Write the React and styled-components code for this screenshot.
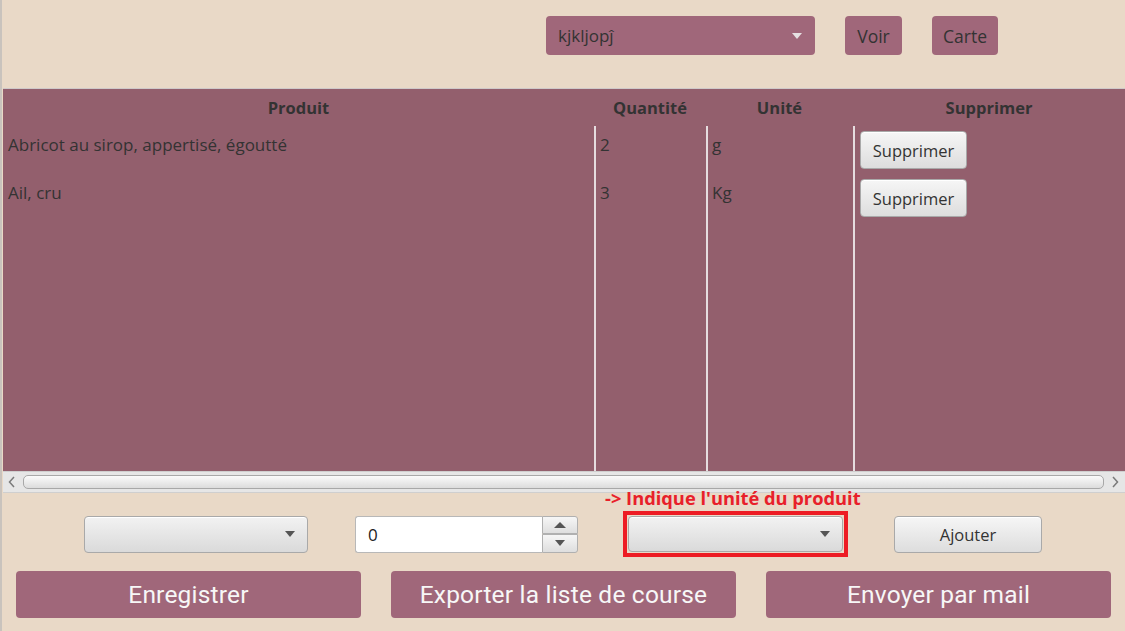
import React from 'react';
import styled, { createGlobalStyle } from 'styled-components';

const GlobalStyle = createGlobalStyle`
  html, body {
    margin: 0;
    padding: 0;
    background: #e9d9c7;
  }
  * {
    box-sizing: border-box;
  }
`;

const Page = styled.div`
  width: 1125px;
  height: 631px;
  background: #e9d9c7;
  border-left: 2px solid #c9c3bd;
  display: flex;
  flex-direction: column;
  font-family: 'Open Sans', 'Noto Sans', sans-serif;
  color: #333333;
  overflow: hidden;
`;

const TopBar = styled.div`
  height: 88px;
  display: flex;
  align-items: flex-start;
  padding: 16px 0 0 544px;
  gap: 30px;
`;

const PinkSelect = styled.div`
  width: 269px;
  height: 39px;
  border-radius: 4px;
  background: #a0677a;
  display: flex;
  align-items: center;
  justify-content: space-between;
  padding: 0 13px 0 12px;
  font-size: 17px;
`;

const PinkButton = styled.div`
  height: 39px;
  width: ${p => p.w}px;
  border-radius: 4px;
  background: #a0677a;
  display: flex;
  align-items: center;
  justify-content: center;
  font-size: 17.5px;
`;

const Caret = styled.span`
  width: 0;
  height: 0;
  border-left: 5px solid transparent;
  border-right: 5px solid transparent;
  border-top: 6px solid ${p => p.color || '#555'};
`;

const TablePanel = styled.div`
  margin-left: 1px;
  border-top: 1px solid #cfc9c9;
  height: 405px;
  display: flex;
  flex-direction: column;
  background: #935f6d;
`;

const Grid = styled.div`
  display: grid;
  grid-template-columns: 591px 112px 147px 272px;
`;

const HeaderCell = styled.div`
  height: 37px;
  display: flex;
  align-items: center;
  justify-content: center;
  font-weight: 700;
  font-size: 16.5px;
  color: #333;
`;

const Body = styled(Grid)`
  flex: 1;
`;

const Column = styled.div`
  display: flex;
  flex-direction: column;
  border-left: ${p => (p.first ? 'none' : '2px solid #e6dcdf')};
`;

const Cell = styled.div`
  height: 48px;
  padding: 7px ${p => (p.first ? '5px' : '4px')} 5px;
  font-size: 17px;
  line-height: 24px;
  color: #333;
`;

const ButtonCell = styled.div`
  height: 48px;
  padding: 5px 0 0 5px;
`;

const GreyButton = styled.div`
  width: ${p => p.w}px;
  height: ${p => p.h || 38}px;
  margin-left: ${p => p.ml || 0}px;
  border: 1px solid #a9a9a9;
  border-radius: 4px;
  background: linear-gradient(#f6f6f6, #dddddd);
  box-shadow: inset 0 1px 0 #ffffff;
  display: flex;
  align-items: center;
  justify-content: center;
  font-size: 16.5px;
  color: #333;
`;

const ScrollBar = styled.div`
  height: 22px;
  background: #e6e6e6;
  border-top: 1px solid #cfcfcf;
  border-bottom: 1px solid #cfcfcf;
  display: flex;
  align-items: center;
  padding: 0 6px 0 5px;
  gap: 7px;
`;

const Thumb = styled.div`
  flex: 1;
  height: 14px;
  border: 1px solid #a8a8a8;
  border-radius: 5px;
  background: linear-gradient(#fbfbfb, #dcdcdc);
`;

const Chevron = ({ dir }) => (
  <svg width="8" height="12" viewBox="0 0 8 12">
    <path
      d={dir === 'left' ? 'M6 1 L1.5 6 L6 11' : 'M2 1 L6.5 6 L2 11'}
      fill="none"
      stroke="#7a7a7a"
      strokeWidth="1.5"
    />
  </svg>
);

const Footer = styled.div`
  display: flex;
  flex-direction: column;
`;

const Hint = styled.div`
  height: 18px;
  padding-left: 603px;
  color: #e8202a;
  font-weight: 700;
  font-size: 18.3px;
  line-height: 10px;
`;

const Controls = styled.div`
  height: 46px;
  display: flex;
  align-items: center;
  padding-left: 82px;
`;

const Combo = styled.div`
  width: ${p => p.w}px;
  height: ${p => p.h || 37}px;
  border: 1px solid #a9a9a9;
  border-radius: 4px;
  background: linear-gradient(#f2f2f2, #dadada);
  box-shadow: inset 0 1px 0 #ffffff;
  display: flex;
  align-items: center;
  justify-content: flex-end;
  padding-right: 12px;
`;

const Marker = styled.div`
  margin-left: 45px;
  border: 4px solid #ed1c24;
  padding: 1px;
`;

const Spinner = styled.div`
  display: flex;
  margin-left: 47px;
  height: 37px;
`;

const SpinField = styled.div`
  width: 187px;
  height: 37px;
  background: #ffffff;
  border: 1px solid #b8b8b8;
  border-right: none;
  border-radius: 3px 0 0 3px;
  display: flex;
  align-items: center;
  padding-left: 12px;
  font-size: 17px;
  color: #222;
`;

const SpinButtons = styled.div`
  display: flex;
  flex-direction: column;
  width: 36px;
`;

const SpinButton = styled.div`
  height: 18.5px;
  border: 1px solid #b0b0b0;
  border-radius: ${p => (p.up ? '0 3px 0 0' : '0 0 3px 0')};
  background: linear-gradient(#f6f6f6, #dedede);
  display: flex;
  align-items: center;
  justify-content: center;
`;

const UpCaret = styled.span`
  width: 0;
  height: 0;
  border-left: 6px solid transparent;
  border-right: 6px solid transparent;
  border-bottom: 6px solid #555;
`;

const Actions = styled.div`
  display: flex;
  gap: 30px;
  padding: 14px 0 0 14px;
`;

const BigButton = styled.div`
  width: 345px;
  height: 47px;
  border-radius: 4px;
  background: #a0677a;
  display: flex;
  align-items: center;
  justify-content: center;
  color: #f7f7f7;
  font-family: 'Roboto', 'Liberation Sans', sans-serif;
  font-size: 24.5px;
  letter-spacing: 0.2px;
`;

const rows = [
  { produit: 'Abricot au sirop, appertisé, égoutté', quantite: '2', unite: 'g' },
  { produit: 'Ail, cru', quantite: '3', unite: 'Kg' },
];

export default function App() {
  return (
    <Page>
      <GlobalStyle />
      <TopBar>
        <PinkSelect>
          <span>kjkljopĵ</span>
          <Caret color="#e6e0e2" />
        </PinkSelect>
        <PinkButton w={57}>Voir</PinkButton>
        <PinkButton w={66}>Carte</PinkButton>
      </TopBar>

      <TablePanel>
        <Grid>
          <HeaderCell>Produit</HeaderCell>
          <HeaderCell>Quantité</HeaderCell>
          <HeaderCell>Unité</HeaderCell>
          <HeaderCell>Supprimer</HeaderCell>
        </Grid>
        <Body>
          <Column first>
            {rows.map(r => (
              <Cell first key={r.produit}>{r.produit}</Cell>
            ))}
          </Column>
          <Column>
            {rows.map(r => (
              <Cell key={r.produit}>{r.quantite}</Cell>
            ))}
          </Column>
          <Column>
            {rows.map(r => (
              <Cell key={r.produit}>{r.unite}</Cell>
            ))}
          </Column>
          <Column>
            {rows.map(r => (
              <ButtonCell key={r.produit}>
                <GreyButton w={107}>Supprimer</GreyButton>
              </ButtonCell>
            ))}
          </Column>
        </Body>
        <ScrollBar>
          <Chevron dir="left" />
          <Thumb />
          <Chevron dir="right" />
        </ScrollBar>
      </TablePanel>

      <Footer>
        <Hint>-&gt; Indique l'unité du produit</Hint>
        <Controls>
          <Combo w={224}>
            <Caret />
          </Combo>
          <Spinner>
            <SpinField>0</SpinField>
            <SpinButtons>
              <SpinButton up>
                <UpCaret />
              </SpinButton>
              <SpinButton>
                <Caret />
              </SpinButton>
            </SpinButtons>
          </Spinner>
          <Marker>
            <Combo w={215} h={36}>
              <Caret />
            </Combo>
          </Marker>
          <GreyButton w={148} h={37} ml={46}>Ajouter</GreyButton>
        </Controls>
        <Actions>
          <BigButton>Enregistrer</BigButton>
          <BigButton>Exporter la liste de course</BigButton>
          <BigButton>Envoyer par mail</BigButton>
        </Actions>
      </Footer>
    </Page>
  );
}
